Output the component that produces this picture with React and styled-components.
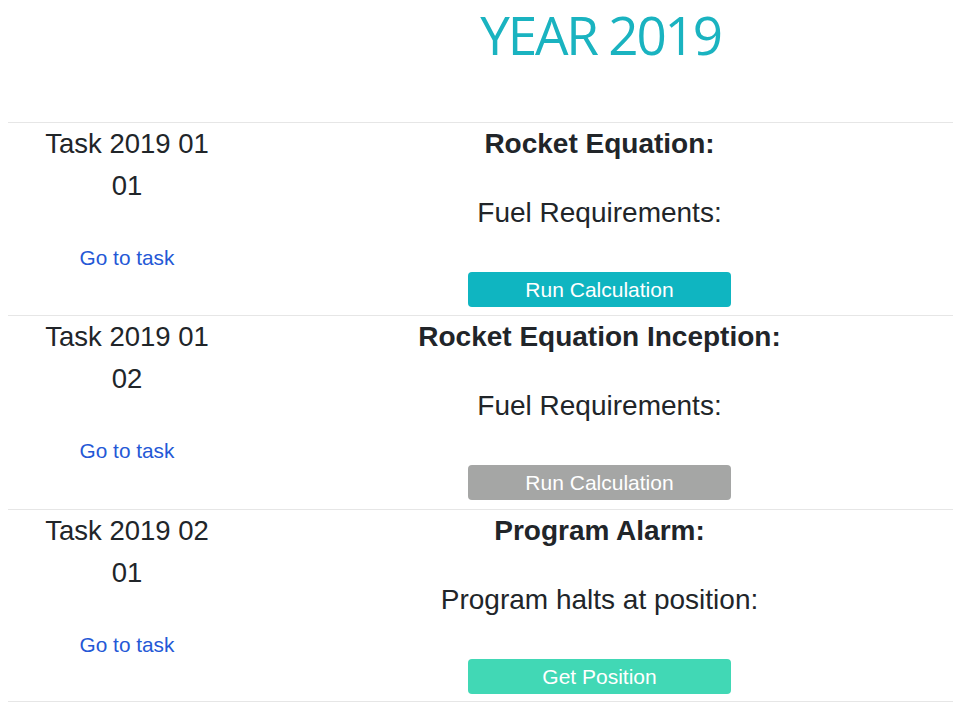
import React from "react";
import styled, { createGlobalStyle } from "styled-components";

const GlobalStyle = createGlobalStyle`
  html, body { margin: 0; padding: 0; background: #ffffff; }
  body {
    font-family: "Liberation Sans", Arial, sans-serif;
    color: #212529;
  }
  * { box-sizing: border-box; }
`;

const Page = styled.div`
  padding-left: 8px;
`;

const Grid = styled.div`
  display: grid;
  grid-template-columns: 238px 1fr;
`;

const Header = styled(Grid)`
  height: 122px;
  align-items: start;
`;

const Title = styled.h1`
  grid-column: 2;
  margin: -2px 0 0;
  padding-left: 2px;
  text-align: center;
  font-family: "Open Sans", sans-serif;
  font-weight: 400;
  font-size: 53px;
  letter-spacing: -2.2px;
  line-height: 74px;
  color: #1ab3c0;
`;

const Row = styled(Grid)`
  border-top: 1px solid #e6e6e6;
  height: ${(p) => p.$h}px;
  &:last-child {
    border-bottom: 1px solid #e6e6e6;
  }
`;

const Info = styled.div`
  display: flex;
  flex-direction: column;
  align-items: center;
  text-align: center;
`;

const TaskName = styled.div`
  max-width: 190px;
  font-size: 27.5px;
  line-height: 42px;
`;

const TaskLink = styled.a`
  margin-top: 36px;
  font-size: 20.8px;
  line-height: 30px;
  color: #2458d6;
  text-decoration: none;
`;

const Body = styled.div`
  display: flex;
  flex-direction: column;
  align-items: center;
  text-align: center;
`;

const TaskTitle = styled.h2`
  margin: 0;
  font-size: 28px;
  font-weight: 700;
  line-height: 42px;
`;

const Result = styled.p`
  margin: 27px 0 0;
  font-size: 28px;
  line-height: 42px;
`;

const ActionButton = styled.button`
  margin-top: 38px;
  width: 263px;
  height: 35px;
  border: none;
  border-radius: 4px;
  background: ${(p) => p.$bg};
  color: #ffffff;
  font-family: "Liberation Sans", Arial, sans-serif;
  font-size: 21px;
  line-height: 33px;
  padding: 0;
  cursor: pointer;
`;

const tasks = [
  {
    name: "Task 2019 01 01",
    title: "Rocket Equation:",
    result: "Fuel Requirements:",
    action: "Run Calculation",
    color: "#0fb5c1",
    h: 193,
  },
  {
    name: "Task 2019 01 02",
    title: "Rocket Equation Inception:",
    result: "Fuel Requirements:",
    action: "Run Calculation",
    color: "#a5a6a5",
    h: 194,
  },
  {
    name: "Task 2019 02 01",
    title: "Program Alarm:",
    result: "Program halts at position:",
    action: "Get Position",
    color: "#41d8b5",
    h: 193,
  },
];

export default function App() {
  return (
    <Page>
      <GlobalStyle />
      <Header>
        <Title>YEAR 2019</Title>
      </Header>
      {tasks.map((t) => (
        <Row key={t.name} $h={t.h}>
          <Info>
            <TaskName>{t.name}</TaskName>
            <TaskLink href="#">Go to task</TaskLink>
          </Info>
          <Body>
            <TaskTitle>{t.title}</TaskTitle>
            <Result>{t.result}</Result>
            <ActionButton $bg={t.color}>{t.action}</ActionButton>
          </Body>
        </Row>
      ))}
    </Page>
  );
}
